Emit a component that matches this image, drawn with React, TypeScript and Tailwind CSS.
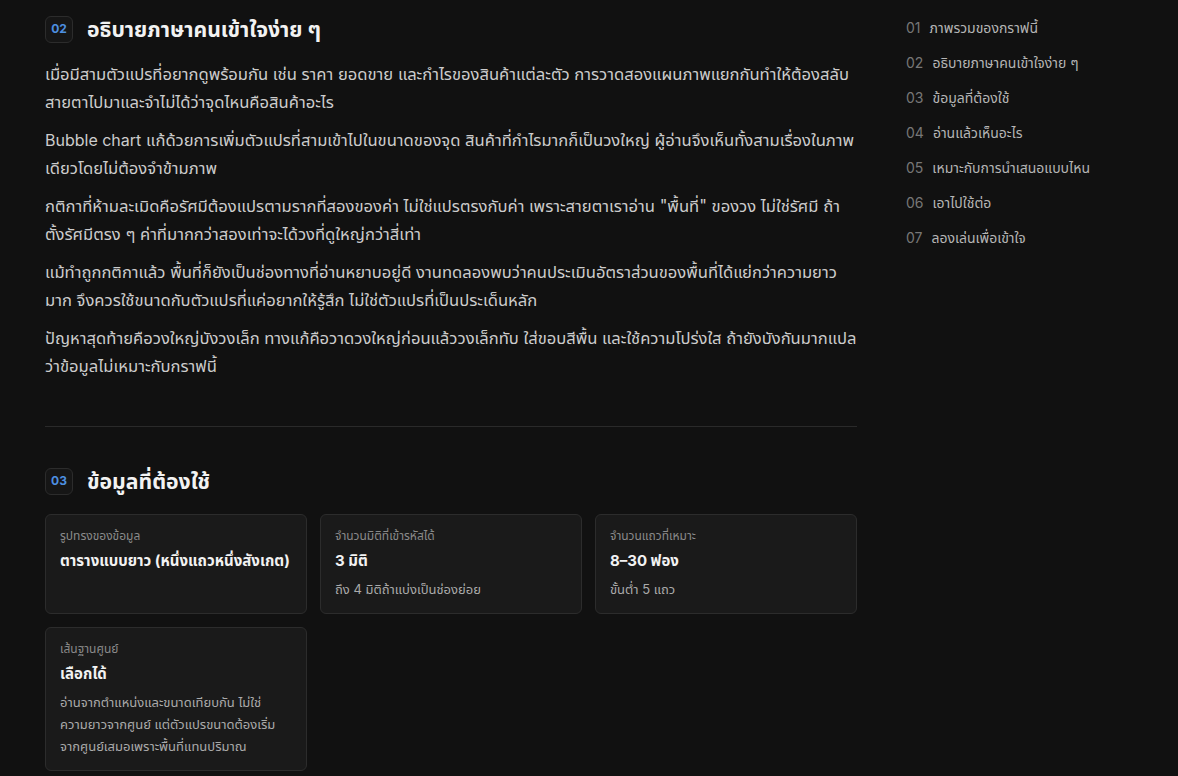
import React from "react";

const toc = [
  { n: "01", label: "ภาพรวมของกราฟนี้" },
  { n: "02", label: "อธิบายภาษาคนเข้าใจง่าย ๆ" },
  { n: "03", label: "ข้อมูลที่ต้องใช้" },
  { n: "04", label: "อ่านแล้วเห็นอะไร" },
  { n: "05", label: "เหมาะกับการนำเสนอแบบไหน" },
  { n: "06", label: "เอาไปใช้ต่อ" },
  { n: "07", label: "ลองเล่นเพื่อเข้าใจ" },
];

const paragraphs: React.ReactNode[] = [
  "เมื่อมีสามตัวแปรที่อยากดูพร้อมกัน เช่น ราคา ยอดขาย และกำไรของสินค้าแต่ละตัว การวาดสองแผนภาพแยกกันทำให้ต้องสลับสายตาไปมาและจำไม่ได้ว่าจุดไหนคือสินค้าอะไร",
  <>
    <span className="text-[16px]">Bubble chart</span> แก้ด้วยการเพิ่มตัวแปรที่สามเข้าไปในขนาดของจุด สินค้าที่กำไรมากก็เป็นวงใหญ่ ผู้อ่านจึงเห็นทั้งสามเรื่องในภาพเดียวโดยไม่ต้องจำข้ามภาพ
  </>,
  "กติกาที่ห้ามละเมิดคือรัศมีต้องแปรตามรากที่สองของค่า ไม่ใช่แปรตรงกับค่า เพราะสายตาเราอ่าน \"พื้นที่\" ของวง ไม่ใช่รัศมี ถ้าตั้งรัศมีตรง ๆ ค่าที่มากกว่าสองเท่าจะได้วงที่ดูใหญ่กว่าสี่เท่า",
  "แม้ทำถูกกติกาแล้ว พื้นที่ก็ยังเป็นช่องทางที่อ่านหยาบอยู่ดี งานทดลองพบว่าคนประเมินอัตราส่วนของพื้นที่ได้แย่กว่าความยาวมาก จึงควรใช้ขนาดกับตัวแปรที่แค่อยากให้รู้สึก ไม่ใช่ตัวแปรที่เป็นประเด็นหลัก",
  "ปัญหาสุดท้ายคือวงใหญ่บังวงเล็ก ทางแก้คือวาดวงใหญ่ก่อนแล้ววงเล็กทับ ใส่ขอบสีพื้น และใช้ความโปร่งใส ถ้ายังบังกันมากแปลว่าข้อมูลไม่เหมาะกับกราฟนี้",
];

const cards = [
  { label: "รูปทรงของข้อมูล", value: "ตารางแบบยาว (หนึ่งแถวหนึ่งสังเกต)", sub: "" },
  { label: "จำนวนมิติที่เข้ารหัสได้", value: "3 มิติ", sub: "ถึง 4 มิติถ้าแบ่งเป็นช่องย่อย" },
  { label: "จำนวนแถวที่เหมาะ", value: "8–30 ฟอง", sub: "ขั้นต่ำ 5 แถว" },
  {
    label: "เส้นฐานศูนย์",
    value: "เลือกได้",
    sub: "อ่านจากตำแหน่งและขนาดเทียบกัน ไม่ใช่ความยาวจากศูนย์ แต่ตัวแปรขนาดต้องเริ่มจากศูนย์เสมอเพราะพื้นที่แทนปริมาณ",
  },
];

function SectionHead({ n, title }: { n: string; title: string }) {
  return (
    <div className="flex items-center gap-[14px]">
      <span className="flex h-[27px] w-[28px] items-center justify-center rounded-md border border-[#2c2c2c] bg-[#161616] text-[12px] font-bold text-[#4d8fe0]">
        {n}
      </span>
      <h2 className="text-[21.2px] font-bold leading-7 text-[#f2f2f2]">{title}</h2>
    </div>
  );
}

export default function App() {
  return (
    <div className="min-h-[776px] bg-[#111111] font-['Inter','Noto_Sans_Thai',sans-serif] text-[#cfcfcf]">
      <div className="flex gap-[49px] pl-[45px] pt-[15px]">
        <main className="w-[812px] shrink-0">
          <section>
            <SectionHead n="02" title="อธิบายภาษาคนเข้าใจง่าย ๆ" />
            <div className="mt-[17px] flex flex-col gap-[10px]">
              {paragraphs.map((p, i) => (
                <p key={i} className="text-[16.6px] leading-[28px] text-[#cccccc]">
                  {p}
                </p>
              ))}
            </div>
          </section>

          <hr className="mt-[46px] border-t border-[#2a2a2a]" />

          <section className="mt-[40px]">
            <SectionHead n="03" title="ข้อมูลที่ต้องใช้" />
            <div className="mt-[19px] grid grid-cols-3 gap-[13px]">
              {cards.map((c) => (
                <div
                  key={c.label}
                  className="rounded-md border border-[#2c2c2c] bg-[#1a1a1a] px-[14px] pb-[13px] pt-[12px]"
                >
                  <div className="text-[12px] leading-[18px] text-[#8a8a8a]">{c.label}</div>
                  <div className="mt-[5px] text-[15px] font-bold leading-[22px] text-[#f2f2f2]">{c.value}</div>
                  {c.sub && (
                    <div className="mt-[6px] pr-[6px] text-[13px] leading-[22px] text-[#aaaaaa]">{c.sub}</div>
                  )}
                </div>
              ))}
            </div>
          </section>
        </main>

        <aside className="-mt-[5px] w-[220px]">
          <ul>
            {toc.map((t) => (
              <li key={t.n} className="flex h-[35px] items-center gap-[9px] text-[14px]">
                <span className="text-[#777777]">{t.n}</span>
                <span className="text-[#b5b5b5]">{t.label}</span>
              </li>
            ))}
          </ul>
        </aside>
      </div>
    </div>
  );
}
